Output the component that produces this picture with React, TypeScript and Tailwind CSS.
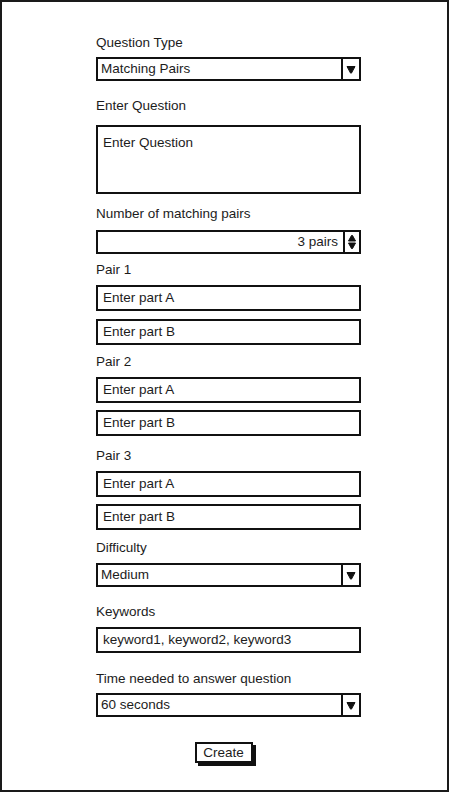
const font = { fontFamily: '"Liberation Sans", Arial, sans-serif' };

function Label({ text, className }: { text: string; className: string }) {
  return <div className={`h-4 text-[13.5px] leading-4 text-[#1c1c1c] ${className}`}>{text}</div>;
}

function TextBox({ text, className }: { text: string; className: string }) {
  return (
    <div className={`h-[26px] border-2 border-[#111] bg-white px-[5px] text-[13.5px] leading-[21px] text-[#1c1c1c] ${className}`}>
      {text}
    </div>
  );
}

function Select({ text, className }: { text: string; className: string }) {
  return (
    <div className={`flex h-6 border-2 border-[#111] bg-white ${className}`}>
      <div className="flex-1 px-[3px] text-[13.5px] leading-5 text-[#1c1c1c]">{text}</div>
      <div className="flex w-[18px] items-center justify-center border-l-2 border-[#111]">
        <svg width="10" height="9" viewBox="0 0 10 9">
          <path d="M1 1.5 L9 1.5 L5.5 8 Q5 8.8 4.5 8 Z" fill="#111" stroke="#111" strokeLinejoin="round" />
        </svg>
      </div>
    </div>
  );
}

function Stepper({ text, className }: { text: string; className: string }) {
  return (
    <div className={`flex h-6 border-2 border-[#111] bg-white ${className}`}>
      <div className="flex-1 px-[5px] text-right text-[13.5px] leading-5 text-[#1c1c1c]">{text}</div>
      <div className="flex w-[16px] items-center justify-center border-l-2 border-[#111]">
        <svg width="10" height="16" viewBox="0 0 10 16">
          <path d="M1.5 7 L8.5 7 L5.5 1.5 Q5 0.8 4.5 1.5 Z" fill="#111" stroke="#111" strokeLinejoin="round" />
          <path d="M1.5 9 L8.5 9 L5.5 14.5 Q5 15.2 4.5 14.5 Z" fill="#111" stroke="#111" strokeLinejoin="round" />
        </svg>
      </div>
    </div>
  );
}

export default function App() {
  return (
    <div className="bg-white" style={font}>
      <div className="flex h-[792px] w-[449px] flex-col border-2 border-[#1a1a1a] bg-white">
        <div className="ml-[94px] flex w-[265px] flex-col">
          <Label text="Question Type" className="mt-[33px]" />
          <Select text="Matching Pairs" className="mt-[6px]" />

          <Label text="Enter Question" className="mt-[17px]" />
          <div className="mt-[11px] h-[69px] border-2 border-[#111] bg-white px-[5px] pt-[8px] text-[13.5px] leading-4 text-[#1c1c1c]">
            Enter Question
          </div>

          <Label text="Number of matching pairs" className="mt-[12px]" />
          <Stepper text="3 pairs" className="mt-[8px]" />

          <Label text="Pair 1" className="mt-[8px]" />
          <TextBox text="Enter part A" className="mt-[7px]" />
          <TextBox text="Enter part B" className="mt-[8px]" />

          <Label text="Pair 2" className="mt-[9px]" />
          <TextBox text="Enter part A" className="mt-[7px]" />
          <TextBox text="Enter part B" className="mt-[7px]" />

          <Label text="Pair 3" className="mt-[12px]" />
          <TextBox text="Enter part A" className="mt-[7px]" />
          <TextBox text="Enter part B" className="mt-[7px]" />

          <Label text="Difficulty" className="mt-[10px]" />
          <Select text="Medium" className="mt-[7px]" />

          <Label text="Keywords" className="mt-[17px]" />
          <TextBox text="keyword1, keyword2, keyword3" className="mt-[7px]" />

          <Label text="Time needed to answer question" className="mt-[18px]" />
          <Select text="60 seconds" className="mt-[6px]" />
        </div>
        <div className="mt-[25px] flex justify-center pr-[2px]">
          <div className="h-[21px] w-[58px] border-2 border-[#111] bg-white text-center text-[13.5px] leading-[17px] text-[#1c1c1c] shadow-[3px_3px_0_#111]">
            Create
          </div>
        </div>
      </div>
    </div>
  );
}
